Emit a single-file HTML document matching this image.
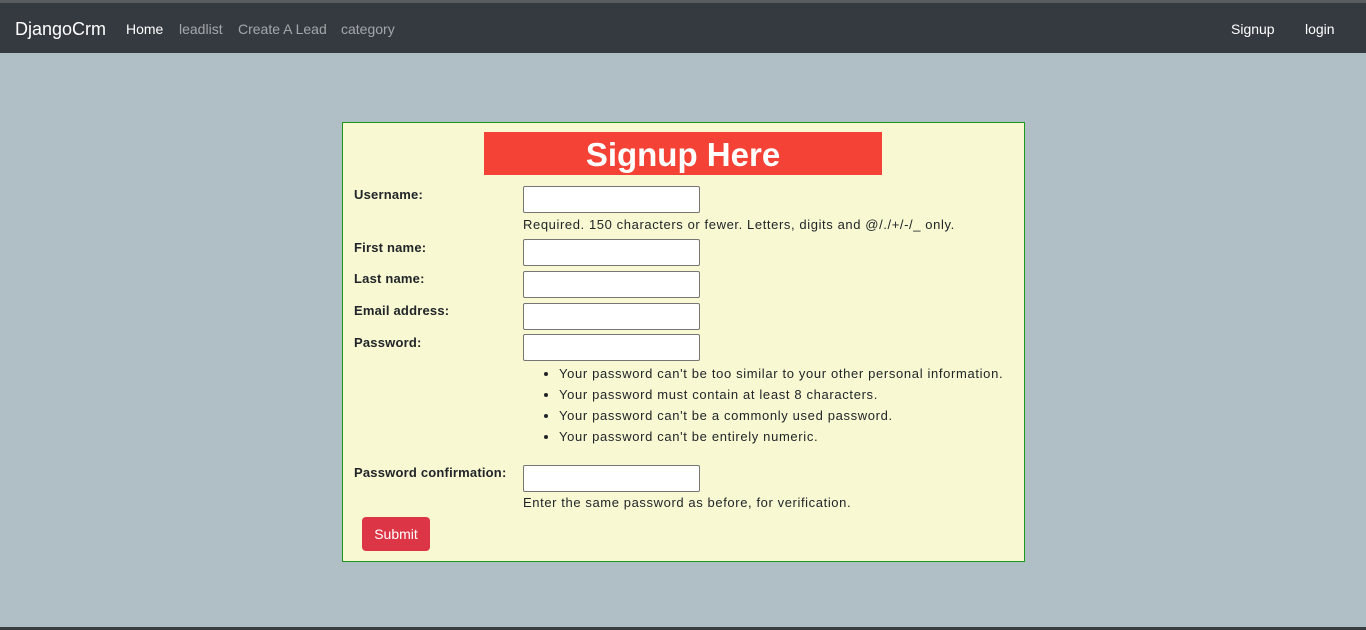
<!DOCTYPE html>
<html><head><style>
*{margin:0;padding:0;box-sizing:border-box}
body{width:1366px;height:630px;background:#b0bec5;font-family:"Liberation Sans",sans-serif;position:relative;overflow:hidden;color:#212529}
.top{position:absolute;left:0;top:0;width:1366px;height:3px;background:#5a5d60}
.nav{position:absolute;left:0;top:3px;width:1366px;height:50px;background:#343a40}
.a{position:absolute;top:0;line-height:52px;font-size:14px;color:rgba(255,255,255,.55)}
.bot{position:absolute;left:0;top:627px;width:1366px;height:3px;background:#3a3d40}
.card{position:absolute;left:342px;top:122px;width:683px;height:440px;background:#f8f9d2;border:1px solid #1a9a1a}
.t{position:absolute;left:141px;top:9px;width:398px;height:43px;background:#f44336;color:#fff;font-weight:bold;font-size:33px;text-align:center;line-height:45px}
.l{position:absolute;left:11px;font-size:13px;font-weight:bold;letter-spacing:0.2px}
.i{position:absolute;left:180px;width:177px;height:27px;background:#fff;border:1px solid #767676;border-radius:2px}
.h{position:absolute;left:180px;font-size:13px;letter-spacing:0.6px}
ul{position:absolute;left:216px;top:240px;font-size:13px;line-height:21px;letter-spacing:0.65px}
.btn{position:absolute;left:19px;top:394px;width:68px;height:34px;background:#dc3545;color:#fff;border-radius:4px;font-size:14px;text-align:center;line-height:34px}
</style></head><body>
<div class="top"></div>
<div class="nav">
<span class="a" style="left:15px;font-size:18px;color:#fff">DjangoCrm</span>
<span class="a" style="left:126px;color:#fff">Home</span>
<span class="a" style="left:179px">leadlist</span>
<span class="a" style="left:238px">Create A Lead</span>
<span class="a" style="left:341px">category</span>
<span class="a" style="left:1231px;color:#fff">Signup</span>
<span class="a" style="left:1305px;color:#fff">login</span>
</div>
<div class="card">
<div class="t">Signup Here</div>
<div class="l" style="top:64px">Username:</div><div class="i" style="top:63px"></div>
<div class="h" style="top:94px">Required. 150 characters or fewer. Letters, digits and @/./+/-/_ only.</div>
<div class="l" style="top:117px">First name:</div><div class="i" style="top:116px"></div>
<div class="l" style="top:148px">Last name:</div><div class="i" style="top:148px"></div>
<div class="l" style="top:180px">Email address:</div><div class="i" style="top:180px"></div>
<div class="l" style="top:212px">Password:</div><div class="i" style="top:211px"></div>
<ul><li>Your password can't be too similar to your other personal information.</li><li>Your password must contain at least 8 characters.</li><li>Your password can't be a commonly used password.</li><li>Your password can't be entirely numeric.</li></ul>
<div class="l" style="top:342px">Password confirmation:</div><div class="i" style="top:342px"></div>
<div class="h" style="top:372px">Enter the same password as before, for verification.</div>
<div class="btn">Submit</div>
</div>
<div class="bot"></div>
</body></html>
